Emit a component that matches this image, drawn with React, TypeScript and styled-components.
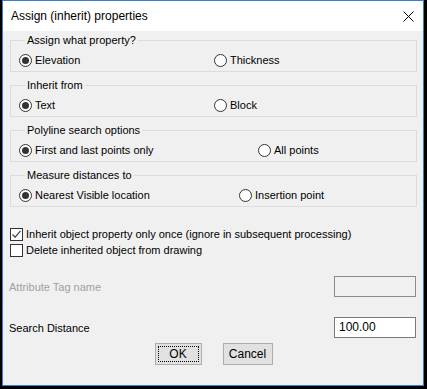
import React from "react";
import styled, { createGlobalStyle } from "styled-components";

const GlobalStyle = createGlobalStyle`
  html, body {
    margin: 0;
    padding: 0;
    background: #000;
  }
  body {
    font-family: "Liberation Sans", Arial, sans-serif;
    font-size: 11px;
    color: #000;
  }
`;

const Window = styled.div`
  margin-left: 2px;
  width: 420px;
  height: 384px;
  border: 1px solid #3b7bd8;
  background: #f0f0f0;
  display: flex;
  flex-direction: column;
`;

const TitleBar = styled.div`
  height: 30px;
  flex: none;
  background: #fff;
  display: flex;
  align-items: center;
  justify-content: space-between;
  padding: 0 9px 0 8px;
`;

const Title = styled.span`
  font-size: 12px;
`;

const Body = styled.div`
  display: flex;
  flex-direction: column;
  padding: 1px 6px 0 6px;
`;

const Group = styled.fieldset`
  box-sizing: border-box;
  height: 40px;
  margin: 0 0 5px 1px;
  padding: 5px 0 0 8px;
  border: 1px solid #dcdcdc;
  min-width: 0;
`;

const Legend = styled.legend`
  margin-left: 6px;
  padding: 0 2px;
  height: 16px;
  line-height: 16px;
`;

const RadioRow = styled.div<{ $split: number }>`
  display: grid;
  grid-template-columns: ${(p) => p.$split}px auto;
  height: 14px;
  align-items: center;
`;

const Option = styled.label`
  display: flex;
  align-items: center;
  gap: 3px;
  white-space: nowrap;
  height: 14px;
  line-height: 14px;
`;

const RadioDot = styled.span<{ $on?: boolean }>`
  width: 11px;
  height: 11px;
  border: 1px solid #333;
  border-radius: 50%;
  background: #fff;
  display: flex;
  align-items: center;
  justify-content: center;
  &::after {
    content: "";
    width: 7px;
    height: 7px;
    border-radius: 50%;
    background: ${(p) => (p.$on ? "#333" : "transparent")};
  }
`;

const CheckList = styled.div`
  margin: 14px 0 0 1px;
  display: flex;
  flex-direction: column;
`;

const CheckRow = styled.label`
  display: flex;
  align-items: center;
  gap: 3px;
  height: 16px;
`;

const Box = styled.span`
  width: 11px;
  height: 11px;
  border: 1px solid #333;
  background: #fff;
  display: flex;
  align-items: center;
  justify-content: center;
`;

const FieldRow = styled.div<{ $top: number }>`
  margin-top: ${(p) => p.$top}px;
  display: flex;
  align-items: center;
  justify-content: space-between;
  height: 21px;
  padding-right: 1px;
`;

const FieldLabel = styled.span<{ $disabled?: boolean }>`
  color: ${(p) => (p.$disabled ? "#a0a0a0" : "#000")};
`;

const TextInput = styled.div<{ $disabled?: boolean }>`
  box-sizing: border-box;
  width: 82px;
  height: 21px;
  border: 1px solid ${(p) => (p.$disabled ? "#8c8c8c" : "#7a7a7a")};
  background: ${(p) => (p.$disabled ? "#f0f0f0" : "#fff")};
  padding: 2px 4px;
  line-height: 15px;
  font-size: 12px;
`;

const Buttons = styled.div`
  margin-top: 5px;
  display: flex;
  justify-content: center;
  gap: 21px;
  padding-left: 1px;
`;

const Button = styled.div<{ $w: number; $focus?: boolean }>`
  box-sizing: border-box;
  width: ${(p) => p.$w}px;
  height: 22px;
  border: 1px solid #adadad;
  background: #e1e1e1;
  display: flex;
  align-items: center;
  justify-content: center;
  font-size: 12px;
  position: relative;
  &::after {
    content: "";
    display: ${(p) => (p.$focus ? "block" : "none")};
    position: absolute;
    inset: 2px;
    border: 1px dotted #000;
  }
`;

const Check = () => (
  <svg width="11" height="11" viewBox="0 0 11 11">
    <path d="M1.5 5.5 L4.2 8.2 L9.5 1.8" fill="none" stroke="#333" strokeWidth="1.1" />
  </svg>
);

const CloseIcon = () => (
  <svg width="11" height="11" viewBox="0 0 11 11">
    <path d="M0.5 0.5 L10.5 10.5 M10.5 0.5 L0.5 10.5" stroke="#000" strokeWidth="1" />
  </svg>
);

interface RadioGroupProps {
  legend: string;
  first: string;
  second: string;
  split: number;
}
const RadioGroup: React.FC<RadioGroupProps> = ({ legend, first, second, split }) => (
  <Group>
    <Legend>{legend}</Legend>
    <RadioRow $split={split}>
      <Option>
        <RadioDot $on />
        {first}
      </Option>
      <Option>
        <RadioDot />
        {second}
      </Option>
    </RadioRow>
  </Group>
);

const App: React.FC = () => (
  <>
    <GlobalStyle />
    <Window>
      <TitleBar>
        <Title>Assign (inherit) properties</Title>
        <CloseIcon />
      </TitleBar>
      <Body>
        <RadioGroup legend="Assign what property?" first="Elevation" second="Thickness" split={195} />
        <RadioGroup legend="Inherit from" first="Text" second="Block" split={195} />
        <RadioGroup
          legend="Polyline search options"
          first="First and last points only"
          second="All points"
          split={239}
        />
        <RadioGroup
          legend="Measure distances to"
          first="Nearest Visible location"
          second="Insertion point"
          split={220}
        />
        <CheckList>
          <CheckRow>
            <Box>
              <Check />
            </Box>
            Inherit object property only once (ignore in subsequent processing)
          </CheckRow>
          <CheckRow>
            <Box />
            Delete inherited object from drawing
          </CheckRow>
        </CheckList>
        <FieldRow $top={18}>
          <FieldLabel $disabled>Attribute Tag name</FieldLabel>
          <TextInput $disabled />
        </FieldRow>
        <FieldRow $top={20}>
          <FieldLabel>Search Distance</FieldLabel>
          <TextInput>100.00</TextInput>
        </FieldRow>
        <Buttons>
          <Button $w={47} $focus>
            OK
          </Button>
          <Button $w={50}>Cancel</Button>
        </Buttons>
      </Body>
    </Window>
  </>
);
export default App;
